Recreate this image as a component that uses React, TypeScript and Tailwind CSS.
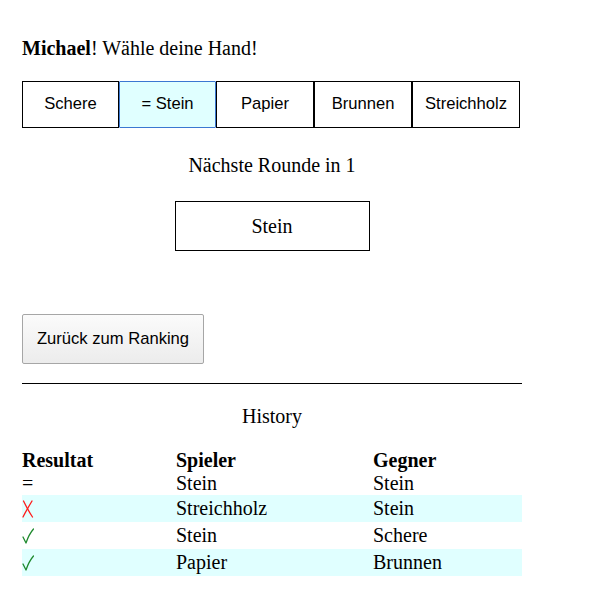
import React from "react";

const serif = { fontFamily: '"Liberation Serif", "Times New Roman", serif' };

function Cross() {
  return (
    <svg width="12" height="18" viewBox="0 0 12 18" className="block">
      <path d="M1.5 1 C4 6 7 12 10.5 17" stroke="#ff1a1a" strokeWidth="1.3" fill="none" strokeLinecap="round" />
      <path d="M10 1 C7 6 4 11 1 17" stroke="#ff1a1a" strokeWidth="1.3" fill="none" strokeLinecap="round" />
    </svg>
  );
}

function Check() {
  return (
    <svg width="12" height="16" viewBox="0 0 12 16" className="block">
      <path d="M1 9 L4 15 C6 9 8 5 11.5 1" stroke="#1f8a2e" strokeWidth="1.3" fill="none" strokeLinecap="round" strokeLinejoin="round" />
    </svg>
  );
}

export default function App() {
  const hands = [
    { label: "Schere", w: "w-[97px]", active: false },
    { label: "= Stein", w: "w-[97px]", active: true },
    { label: "Papier", w: "w-[98px]", active: false },
    { label: "Brunnen", w: "w-[98px]", active: false },
    { label: "Streichholz", w: "w-[108px]", active: false },
  ];
  const rows = [
    { r: "eq", p: "Stein", g: "Stein", bg: "bg-white", h: "h-[23px]" },
    { r: "x", p: "Streichholz", g: "Stein", bg: "bg-[#e0ffff]", h: "h-[27px]" },
    { r: "ok", p: "Stein", g: "Schere", bg: "bg-white", h: "h-[27px]" },
    { r: "ok", p: "Papier", g: "Brunnen", bg: "bg-[#e0ffff]", h: "h-[27px]" },
  ];
  return (
    <div className="min-h-[609px] w-[600px] bg-white text-black" style={serif}>
      <div className="ml-[22px] w-[500px] flex flex-col">
        <div className="mt-[37px] h-[23px] text-[20px] leading-[23px]">
          <b>Michael</b>! Wähle deine Hand!
        </div>
        <div className="mt-[21px] flex h-[47px] font-['Liberation_Sans',Arial,sans-serif] text-[16.6px]">
          {hands.map((h) => (
            <div
              key={h.label}
              className={`${h.w} h-[47px] flex items-center justify-center border ${
                h.active ? "border-[#3b77d1] bg-[#e0ffff] rounded-[1px]" : "border-black bg-white"
              }`}
            >
              {h.label}
            </div>
          ))}
        </div>
        <div className="mt-[26px] h-[23px] text-center text-[20px] leading-[23px]">Nächste Rounde in 1</div>
        <div className="mt-[24px] mx-auto w-[195px] h-[50px] border border-black flex items-center justify-center text-[20px]">
          Stein
        </div>
        <div className="mt-[63px] w-[182px] h-[50px] border border-[#a6a6a6] rounded-[2px] bg-gradient-to-b from-[#fbfbfb] to-[#ececec] flex items-center justify-center font-['Liberation_Sans',Arial,sans-serif] text-[16.6px]">
          Zurück zum Ranking
        </div>
        <div className="mt-[19px] h-px w-[500px] bg-black" />
        <div className="mt-[21px] h-[23px] text-center text-[20px] leading-[23px]">History</div>
        <div className="mt-[21px] flex flex-col text-[20px] leading-[23px]">
          <div className="flex h-[23px] font-bold">
            <div className="w-[154px]">Resultat</div>
            <div className="w-[197px]">Spieler</div>
            <div className="w-[149px]">Gegner</div>
          </div>
          {rows.map((row, i) => (
            <div key={i} className={`flex items-center ${row.h} ${row.bg}`}>
              <div className="w-[154px] flex items-center">
                {row.r === "eq" ? <span>=</span> : row.r === "x" ? <Cross /> : <Check />}
              </div>
              <div className="w-[197px]">{row.p}</div>
              <div className="w-[149px]">{row.g}</div>
            </div>
          ))}
        </div>
      </div>
    </div>
  );
}
